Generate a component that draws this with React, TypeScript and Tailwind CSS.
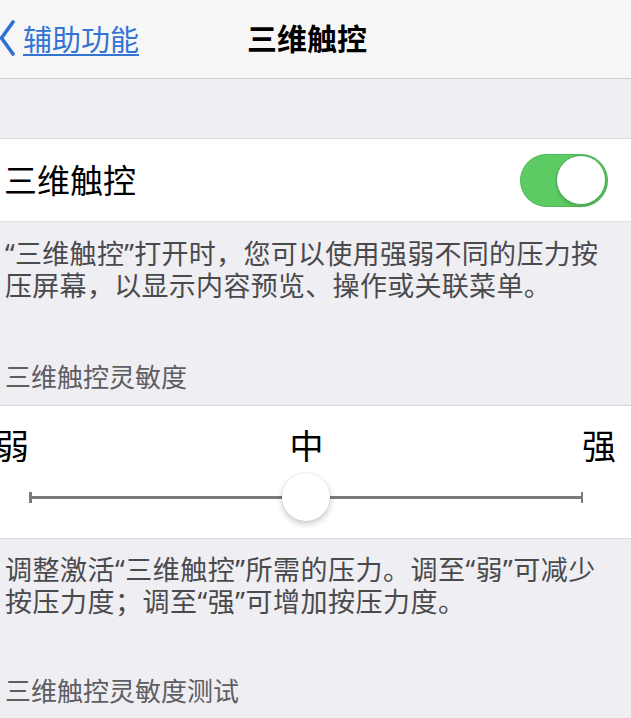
import React from "react";

const FONT = "font-['Noto_Sans','Noto_Sans_CJK_SC',sans-serif]";

function NavBar() {
  return (
    <div className="h-[79px] bg-[#f7f7f8] border-b border-[#cfcfd3] flex items-center">
      <div className="flex items-center">
        <svg width="15" height="36" viewBox="0 0 15 36" className="shrink-0 -mt-[2px]">
          <polyline points="13,2 1.5,18 13,34" fill="none" stroke="#2f6fd6" strokeWidth="3.6" strokeLinecap="round" strokeLinejoin="round" />
        </svg>
        <span className="ml-[8px] text-[29px] leading-none text-[#3374d3] underline decoration-[1.5px] underline-offset-[3px]">辅助功能</span>
      </div>
      <div className="ml-[108px] text-[30px] leading-none font-semibold text-black">三维触控</div>
    </div>
  );
}

function Toggle() {
  return (
    <div className="w-[88px] h-[53px] rounded-full bg-[#5ccb63] border border-[#4fb857] flex items-center justify-end p-[1px]">
      <div className="w-[50px] h-[50px] rounded-full bg-white border border-[#4aa652] shadow-[0_2px_3px_rgba(0,0,0,0.15)]" />
    </div>
  );
}

function Slider() {
  return (
    <div className="relative ml-[29px] mr-[48px] h-[2.5px] bg-[#7b7b7b]">
      <div className="absolute left-0 -top-[4px] w-[2.5px] h-[11px] bg-[#7b7b7b]" />
      <div className="absolute right-0 -top-[4px] w-[2.5px] h-[11px] bg-[#7b7b7b]" />
      <div className="absolute left-1/2 top-1/2 -translate-x-1/2 -translate-y-1/2 w-[48px] h-[48px] rounded-full bg-white shadow-[0_3px_6px_rgba(0,0,0,0.22),0_0_1px_rgba(0,0,0,0.15)]" />
    </div>
  );
}

export default function App() {
  return (
    <div className={`w-[631px] h-[718px] overflow-hidden bg-[#efeef3] ${FONT}`}>
      <NavBar />

      {/* spacer */}
      <div className="h-[60px] border-b border-[#d9d8dd]" />

      {/* toggle row */}
      <div className="h-[83px] bg-white border-b border-[#e2e1e6] flex items-center justify-between pl-[4px] pr-[23px]">
        <span className="text-[33px] leading-none text-black">三维触控</span>
        <Toggle />
      </div>

      {/* footer + header */}
      <div className="pt-[16px] pl-[5px] text-[27px] leading-[32px] tracking-[0.3px] text-[#4a4a4d] whitespace-nowrap">
        <p>“三维触控”打开时，您可以使用强弱不同的压力按</p>
        <p>压屏幕，以显示内容预览、操作或关联菜单。</p>
      </div>
      <div className="pt-[59px] pb-[12px] pl-[5px] text-[26px] leading-[32px] text-[#5d5d62] border-b border-[#d6d5da]">
        三维触控灵敏度
      </div>

      {/* slider section */}
      <div className="h-[133px] bg-white border-b border-[#dcdbe0] pt-[22px]">
        <div className="flex justify-between items-center ml-[-5px] mr-[15px] text-[34px] leading-[36px] text-black">
          <span>弱</span>
          <span className="ml-[2px]">中</span>
          <span>强</span>
        </div>
        <div className="mt-[32px]">
          <Slider />
        </div>
      </div>

      <div className="pt-[15px] pl-[5px] text-[27px] leading-[32px] tracking-[0.5px] text-[#4a4a4d] whitespace-nowrap">
        <p>调整激活“三维触控”所需的压力。调至“弱”可减少</p>
        <p>按压力度；调至“强”可增加按压力度。</p>
      </div>
      <div className="pt-[57px] pl-[5px] text-[26px] leading-[32px] text-[#5d5d62]">
        三维触控灵敏度测试
      </div>
    </div>
  );
}
